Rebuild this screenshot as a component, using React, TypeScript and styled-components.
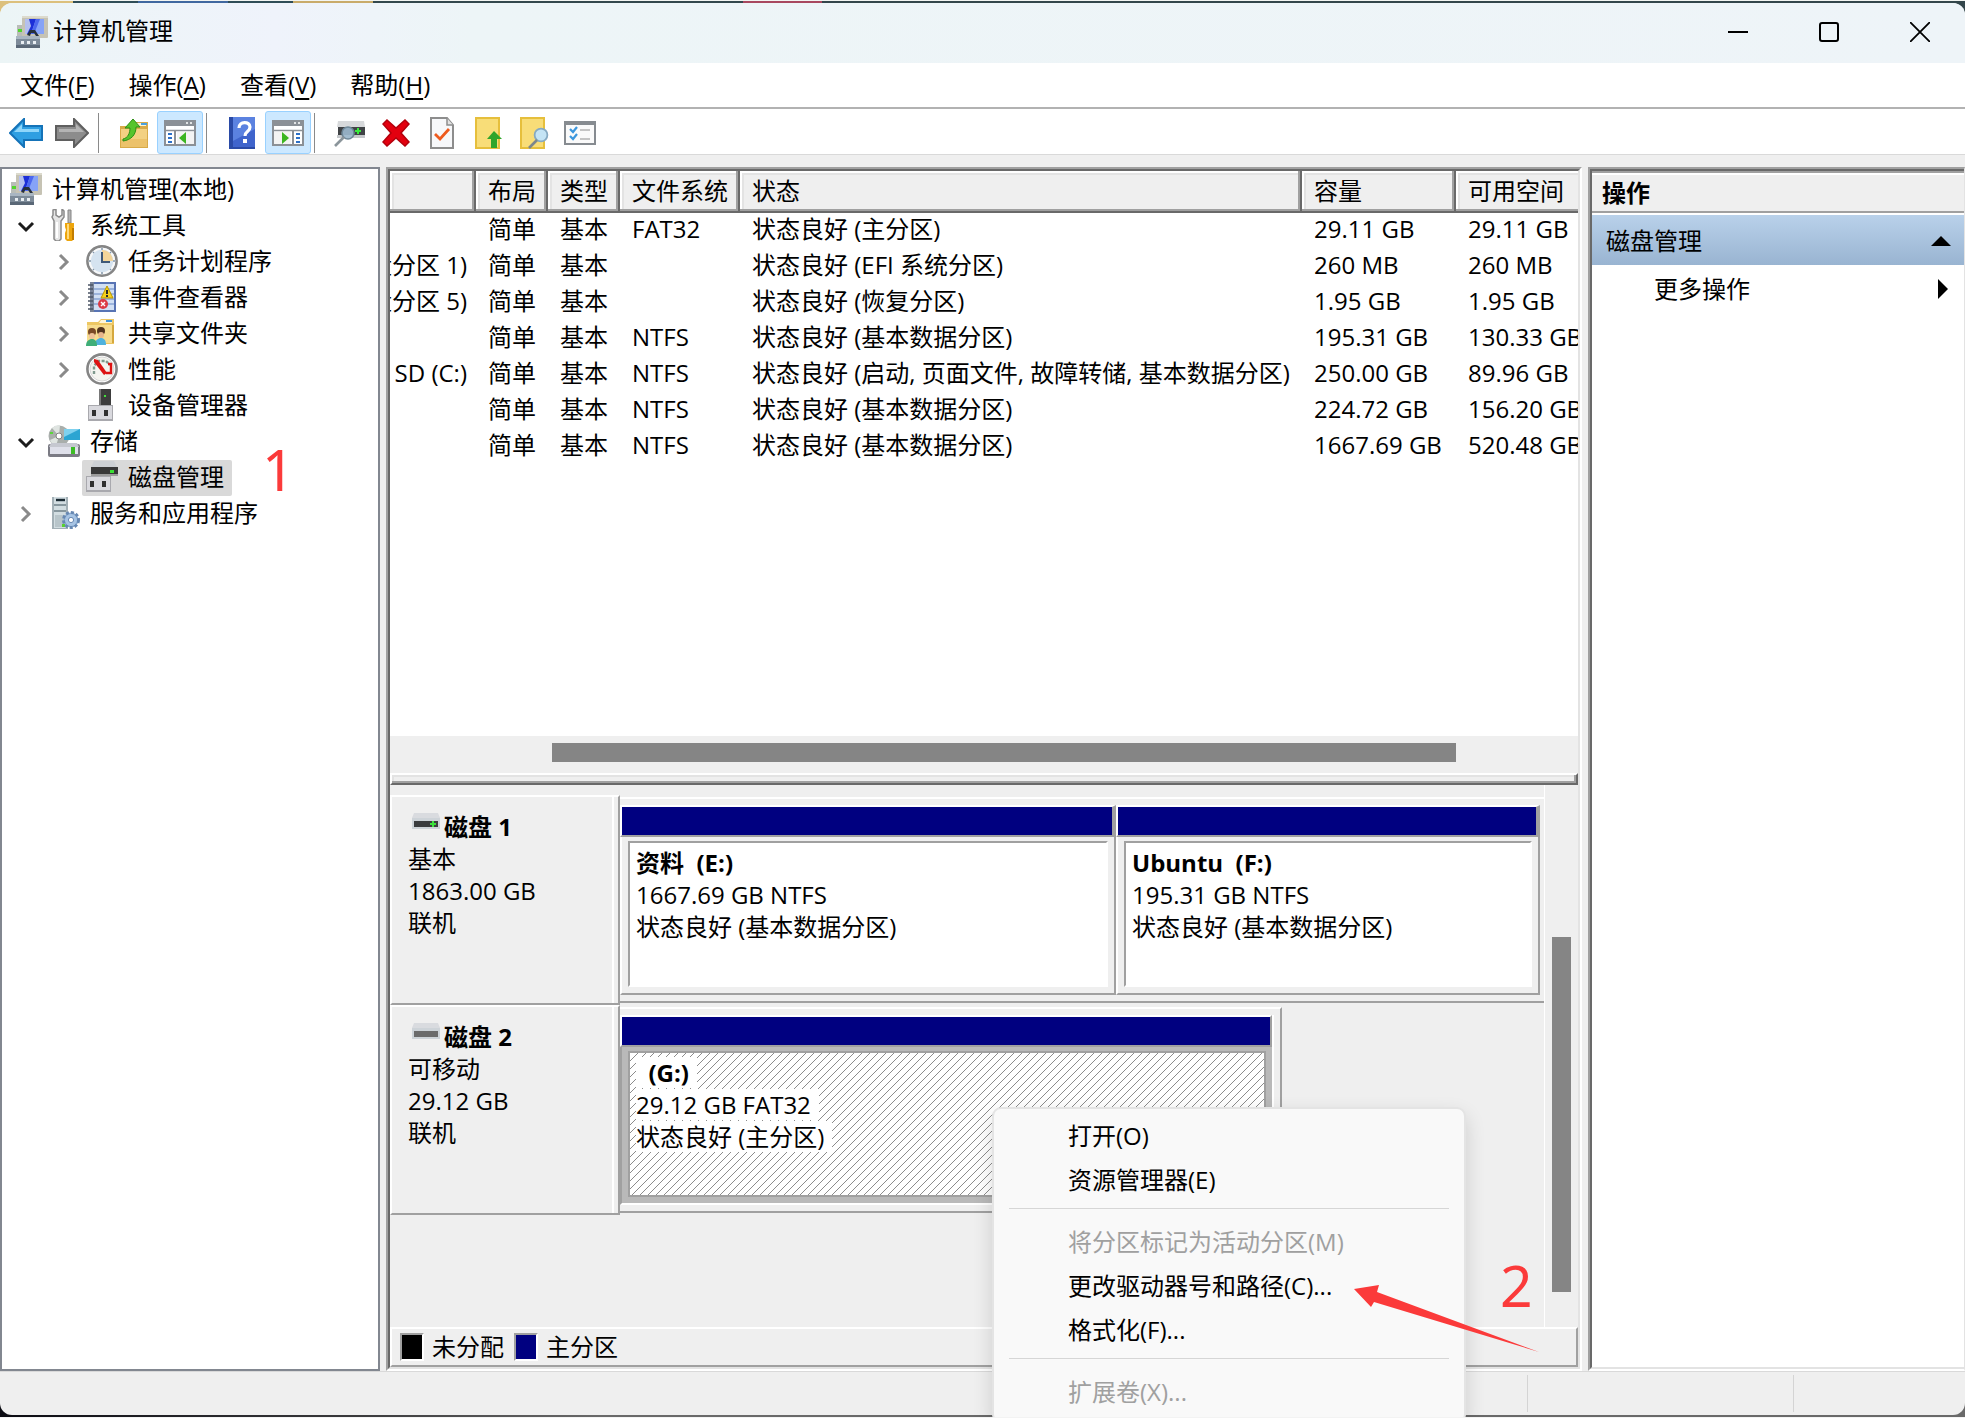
import React from "react";
import styled, { createGlobalStyle, css } from "styled-components";

const GlobalStyle = createGlobalStyle`
  *, *::before, *::after { box-sizing: border-box; }
  body {
    margin: 0;
    font-family: "Open Sans", "Noto Sans CJK SC", sans-serif;
    font-size: 24px;
    line-height: 32px;
    color: #000;
  }
  button { font: inherit; color: inherit; background: none; border: 0; padding: 0; margin: 0; text-align: left; }
  svg { display: block; flex: none; }
  h1, h2, p, ul { margin: 0; padding: 0; font: inherit; list-style: none; }
`;

const c = {
  face: "#efefef",
  shadow: "#a0a0a0",
  dark: "#696969",
  light: "#e3e3e3",
  thumb: "#858585",
  navy: "#000080",
  red: "#fb3a3a",
};

/* ---------- window frame ---------- */

const Desktop = styled.div`
  position: relative;
  display: flex;
  flex-direction: column;
  height: 100vh;
  min-height: 900px;
  overflow: hidden;
  padding: 2px 0;
  border-top: 1px solid #f3f5f2;
  border-bottom: 1px solid #f3f3f3;
  background:
    linear-gradient(90deg, #dcc07c 73px, #2f4d57 73px 138px, #4068a0 138px 228px, #2f4d57 228px 293px,
      #c9ab6a 293px 373px, #33484d 373px 743px, #a8485f 743px 822px, #33464b 822px) top / 100% 20px no-repeat,
    linear-gradient(90deg, #0b0b12, #3a3a3c 360px, #696969 600px) bottom / 100% 20px no-repeat;
`;

const Frame = styled.main`
  flex: 1;
  min-height: 0;
  display: flex;
  flex-direction: column;
  background: ${c.face};
  border-radius: 12px;
  overflow: hidden;
`;

const TitleBar = styled.header`
  display: flex;
  align-items: center;
  height: 60px;
  flex: none;
  padding: 0 0 3px 16px;
  background: linear-gradient(90deg, #ecf5f6, #eff3fb 14%, #edf5f7 24%, #eef4f8);
`;

const Title = styled.h1`
  flex: 1;
  padding: 0 0 2px 5px;
`;

const CaptionButton = styled.button`
  width: 91px;
  height: 56px;
  display: grid;
  place-items: center;
`;

const MenuBar = styled.nav`
  display: flex;
  flex: none;
  height: 46px;
  gap: 34px;
  padding: 0 20px;
  align-items: center;
  background: #fff;
  border-bottom: 2px solid #b2b2b2;
`;

const MenuButton = styled.button`
  text-underline-offset: 4px;
  text-decoration-thickness: 1px;
`;

const ToolBar = styled.div`
  display: flex;
  flex: none;
  height: 46px;
  padding: 2px 3px 0;
  background: #fff;
  border-bottom: 1px solid #d9d9d9;
`;

const ToolButton = styled.button<{ $on?: boolean }>`
  width: 46px;
  height: 43px;
  display: grid;
  place-items: center;
  border: 1px solid transparent;
  border-radius: 3px;
  ${(p) => p.$on && css`background: #cce8ff; border-color: #99d1ff;`}
`;

const ToolSeparator = styled.span`
  width: 1px;
  height: 40px;
  margin: 2px 12px 0 3px;
  background: #8a8a8a;
`;

const Body = styled.div`
  flex: 1;
  min-height: 0;
  display: grid;
  grid-template-columns: 380px minmax(0, 1fr) 377px;
  gap: 6px;
  padding-top: 12px;
`;

const StatusBar = styled.footer`
  display: flex;
  flex: none;
  height: 44px;
  padding: 3px 0;
  justify-content: flex-end;
  border-top: 1px solid #d9d9d9;
`;

const StatusCell = styled.span<{ $width: number }>`
  width: ${(p) => p.$width}px;
  border-left: 1px solid #d4d4d4;
`;

/* ---------- tree ---------- */

const TreePane = styled.aside`
  background: #fff;
  border: 2px solid #828790;
  padding-top: 3px;
`;

const TreeRow = styled.li<{ $level: number }>`
  display: flex;
  height: 36px;
  align-items: center;
  padding-left: ${(p) => (p.$level === 0 ? 8 : p.$level * 38 - 32)}px;
`;

const Twisty = styled.button`
  width: 36px;
  height: 36px;
  display: grid;
  place-items: center;
`;

const TreeItem = styled.button<{ $selected?: boolean; $root?: boolean }>`
  display: flex;
  align-items: center;
  height: 36px;
  gap: 10px;
  padding: 0 8px 2px ${(p) => (p.$root ? 0 : 4)}px;
  border-radius: 2px;
  white-space: nowrap;
  background: ${(p) => (p.$selected ? "#d9d9d9" : "none")};
`;

/* ---------- centre pane ---------- */

const Sunken = styled.section`
  display: flex;
  min-width: 0;
  min-height: 0;
  border: 2px solid;
  border-color: ${c.shadow} #fff #fff ${c.shadow};
`;

const SunkenInner = styled.div`
  flex: 1;
  min-width: 0;
  display: flex;
  flex-direction: column;
  border: 2px solid;
  border-color: ${c.dark} ${c.light} ${c.light} ${c.dark};
`;

const VolumeArea = styled.div`
  flex: 565 1 0;
  min-height: 0;
  overflow: hidden;
  background: #fff;
`;

const VolumeTable = styled.table`
  table-layout: fixed;
  width: 1210px;
  border-spacing: 0;
`;

const HeadCell = styled.th`
  height: 42px;
  padding: 0 0 0 12px;
  text-align: left;
  font-weight: 400;
  white-space: nowrap;
  background: ${c.face};
  border: solid ${c.dark};
  border-width: 0 2px 2px 0;
  box-shadow: inset -2px -2px ${c.shadow}, inset 2px 2px #fff, inset 4px 4px ${c.light};
`;

const Cell = styled.td`
  height: 36px;
  padding: 0 0 4px 12px;
  white-space: nowrap;
`;

const VolumeCell = styled.td`
  height: 36px;
  padding: 0 9px 4px 0;
`;

const ClippedName = styled.div`
  display: flex;
  justify-content: flex-end;
  overflow: hidden;
  white-space: nowrap;
`;

const HScroll = styled.div`
  display: flex;
  flex: none;
  height: 37px;
  padding: 7px 0 11px;
`;

const Splitter = styled.div`
  flex: none;
  height: 12px;
  border: 2px solid;
  border-color: #fff ${c.dark} ${c.dark} #fff;
  box-shadow: inset -2px -2px ${c.shadow}, inset 2px 2px ${c.light};
`;

const Span = styled.span<{ $size: number; $filled?: boolean }>`
  flex: ${(p) => p.$size} 1 0;
  background: ${(p) => (p.$filled ? c.thumb : "none")};
`;

const DiskArea = styled.div`
  flex: 542 1 0;
  min-height: 0;
  display: flex;
  overflow: hidden;
`;

const DiskList = styled.div`
  flex: 1;
  min-width: 0;
  padding-top: 10px;
`;

const VScroll = styled.div`
  display: flex;
  flex-direction: column;
  width: 34px;
  padding: 0 7px;
  border-left: 1px solid #fff;
`;

const DiskRow = styled.div`
  display: grid;
  grid-template-columns: 230px minmax(0, 1fr);
  height: 210px;
`;

const DiskLabel = styled.div`
  padding: 14px 0 0 16px;
  border: 2px solid;
  border-color: #fff ${c.shadow} ${c.shadow} #fff;
  box-shadow: inset -4px 0 ${c.face}, inset -6px 0 #fff;
`;

const DiskName = styled.h2`
  display: flex;
  gap: 4px;
  padding-left: 4px;
  font-weight: 700;
`;

const Track = styled.div<{ $used: number; $free: number }>`
  display: grid;
  grid-template-columns: ${(p) => p.$used}fr ${(p) => p.$free}fr;
  margin: 2px 0;
`;

const Partitions = styled.div<{ $closed?: boolean }>`
  display: flex;
  min-width: 0;
  padding: 6px ${(p) => (p.$closed ? 6 : 4)}px 6px 0;
  border: solid;
  border-width: 2px ${(p) => (p.$closed ? 2 : 0)}px 2px 0;
  border-color: #fff ${c.shadow} ${c.shadow};
`;

const Partition = styled.article<{ $size: number; $selected?: boolean }>`
  flex: ${(p) => p.$size} 1 0;
  min-width: 0;
  display: flex;
  flex-direction: column;
  border-right: ${(p) => (p.$selected ? "2px solid #fff" : 0)};
`;

const PartitionBar = styled.div<{ $selected?: boolean }>`
  height: 32px;
  background: ${c.navy};
  border: solid;
  border-width: 2px ${(p) => (p.$selected ? 2 : 4)}px 2px 2px;
  border-color: #fff ${c.shadow} ${c.shadow} #fff;
`;

const PartitionBody = styled.div<{ $selected?: boolean }>`
  flex: 1;
  display: flex;
  padding: 4px 6px 6px;
  border: solid;
  border-width: 0 ${(p) => (p.$selected ? 0 : 2)}px 2px 2px;
  border-color: ${(p) => (p.$selected ? `#fff #fff #fff ${c.shadow}` : `#fff ${c.shadow} ${c.shadow} #fff`)};
  background: ${(p) => (p.$selected ? "#b9b9b9" : c.face)};
`;

const PartitionFace = styled.div<{ $selected?: boolean }>`
  flex: 1;
  min-width: 0;
  padding: 4px 0 0 6px;
  white-space: pre;
  overflow: hidden;
  background: #fff;
  border: 2px solid;
  border-color: ${(p) => (p.$selected ? c.shadow : `${c.shadow} #fff #fff ${c.shadow}`)};
  ${(p) =>
    p.$selected &&
    css`background: linear-gradient(135deg, #fff 45%, #8c8c8c 46% 54%, #fff 55%) 0 0 / 8px 8px;`}
`;

const Line = styled.p<{ $bold?: boolean }>`
  width: fit-content;
  height: 31px;
  line-height: 31px;
  margin-bottom: 1px;
  padding-right: 8px;
  background: #fff;
  font-weight: ${(p) => (p.$bold ? 700 : 400)};
`;

const Legend = styled.div`
  display: flex;
  flex: none;
  align-items: center;
  height: 40px;
  padding-left: 8px;
  gap: 8px;
  border: 2px solid;
  border-color: #fff ${c.shadow} ${c.shadow} #fff;
`;

const Swatch = styled.span<{ $color: string }>`
  width: 24px;
  height: 28px;
  background: ${(p) => p.$color};
  border: 2px solid;
  border-color: ${c.shadow} #fff #fff ${c.shadow};
`;

const LegendText = styled.span`
  margin-right: 2px;
`;

/* ---------- actions pane ---------- */

const ActionsPane = styled.aside`
  display: flex;
  border: solid;
  border-width: 2px 1px 2px 2px;
  border-color: ${c.shadow} ${c.light} #fff ${c.shadow};
`;

const ActionsInner = styled.div`
  flex: 1;
  display: flex;
  flex-direction: column;
  background: #fff;
  border: solid;
  border-width: 2px 0 2px 2px;
  border-color: ${c.dark} ${c.light} ${c.light} ${c.dark};
`;

const ActionsTitle = styled.h2`
  height: 42px;
  line-height: 40px;
  padding-left: 10px;
  font-weight: 700;
  background: ${c.face};
  border-top: 2px solid ${c.shadow};
  border-bottom: 2px solid ${c.shadow};
  box-shadow: inset 0 2px #fff;
`;

const ActionsGroup = styled.button`
  display: flex;
  align-items: center;
  justify-content: space-between;
  height: 50px;
  margin-top: 2px;
  padding: 2px 13px 0 14px;
  background: linear-gradient(#b9d1ea, #99b4d1);
`;

const ActionsItem = styled.button`
  display: flex;
  align-items: center;
  justify-content: space-between;
  height: 48px;
  padding: 0 16px 0 62px;
`;

/* ---------- context menu and marks over the window ---------- */

const ContextMenu = styled.div`
  position: absolute;
  left: 992px;
  top: 1106px;
  width: 474px;
  padding: 6px 0;
  background: #f9f9f9;
  border: 2px solid #e4e4e4;
  border-radius: 9px;
  box-shadow: 0 8px 20px rgba(0, 0, 0, 0.14);
`;

const ContextItem = styled.button`
  display: block;
  width: 100%;
  height: 44px;
  padding: 0 0 3px 74px;
  &:disabled { color: #a0a0a0; }
`;

const ContextRule = styled.hr`
  height: 1px;
  margin: 5px 15px 12px;
  border: 0;
  background: #d6d6d6;
`;

const Mark = styled.span<{ $x: number; $y: number }>`
  position: absolute;
  left: ${(p) => p.$x}px;
  top: ${(p) => p.$y}px;
  font-family: "Noto Sans", sans-serif;
  font-size: 57px;
  line-height: 60px;
  color: ${c.red};
`;

const ArrowMark = styled.svg`
  position: absolute;
  left: 1350px;
  top: 1280px;
`;

/* ---------- icons ---------- */

const ComputerIcon = () => (
  <svg width="32" height="32" viewBox="0 0 32 32">
    <rect x="1" y="9" width="8" height="12" fill="#b9bdb8" />
    <rect x="2" y="13" width="4" height="3" fill="#52d52e" />
    <rect x="6" y="0" width="26" height="22" rx="1" fill="#c6c3b4" />
    <rect x="6" y="0" width="26" height="2" fill="#dcdacd" />
    <rect x="9" y="3" width="19" height="15" fill="#1c2fd8" />
    <path d="M20 3h8v15H15z" fill="#86a3f7" />
    <path d="M20 3h4l-6 15h-3z" fill="#4d68ee" />
    <path d="M9 3h4l2 7-4 8H9z" fill="#b4c0ee" />
    <path d="M11 19l3-5h5l4 6h-3l-2-3h-3l-1 3z" fill="#26303c" />
    <rect x="0" y="20" width="24" height="12" fill="#7d8b99" />
    <rect x="0" y="20" width="24" height="3" fill="#a9b6c2" />
    <rect x="0" y="29" width="24" height="3" fill="#5a6877" />
    <path d="M5 25h3v3H5zM11 25h3v3h-3zM17 25h3v3h-3z" fill="#e8eef2" />
  </svg>
);

const ToolsIcon = () => (
  <svg width="32" height="32" viewBox="0 0 32 32">
    <path d="M5 6V1l3-1v6l3 2 3-2V0l2 2v6l-3 4v18l-2 2H8l-2-2V12L4 8z" fill="#e5e5e5" stroke="#8a8a8a" strokeWidth="1.5" />
    <path d="M9 13v16" stroke="#fff" strokeWidth="2" />
    <path d="M20 1h3v13h-3z" fill="#b5b5b5" stroke="#858585" />
    <path d="M17 14h9v4l-1 3 1 3v6l-2 2h-5l-2-2v-6l1-3-1-3z" fill="#eda50c" />
    <path d="M19 15h2v15h-2z" fill="#ffd97a" />
    <path d="M24 19h2v12h-2z" fill="#c27d00" />
  </svg>
);

const ClockIcon = () => (
  <svg width="32" height="32" viewBox="0 0 32 32">
    <circle cx="16" cy="16" r="14.6" fill="#d8e5f1" stroke="#858585" strokeWidth="2.6" />
    <circle cx="16" cy="16" r="12.2" fill="#d5e3f0" stroke="#f8f8f8" strokeWidth="2" />
    <path d="M16 16V5a11 11 0 0 1 11 11z" fill="#f3d59a" />
    <path d="M16 7v10h8" fill="none" stroke="#3e5878" strokeWidth="2" />
    <path d="M16 3v2M16 27v2M3 16h2M27 16h2M7 7l1 1M25 25l-1-1M7 25l1-1M25 7l-1 1" stroke="#8296aa" strokeWidth="1.5" />
  </svg>
);

const EventIcon = () => (
  <svg width="32" height="32" viewBox="0 0 32 32">
    <rect x="4" y="1" width="26" height="30" fill="#5874b4" />
    <rect x="8" y="3" width="20" height="26" fill="#d2e0f4" />
    <path d="M8 8h20M8 13h20M8 18h20M8 23h20" stroke="#8ba5d3" strokeWidth="1.5" />
    <rect x="4" y="1" width="4" height="30" fill="#7a8498" />
    <path d="M2 4h5M2 8h5M2 12h5M2 16h5M2 20h5M2 24h5M2 28h5" stroke="#4c5566" strokeWidth="1.6" />
    <path d="M21 5l6 12H15z" fill="#f6d21c" stroke="#b99500" />
    <path d="M21 9v4M21 14v2" stroke="#2a2a2a" strokeWidth="2" />
    <circle cx="17" cy="23" r="5" fill="#dc3b45" />
    <path d="M15 21l4 4M19 21l-4 4" stroke="#fff" strokeWidth="1.4" />
  </svg>
);

const SharedIcon = () => (
  <svg width="32" height="32" viewBox="0 0 32 32">
    <path d="M1 5h11l3-3h13v25H1z" fill="#edc763" />
    <path d="M15 3h11v3H13z" fill="#fff6d8" />
    <path d="M20 3h6v2h-6z" fill="#3f93de" />
    <path d="M1 8h27v18H1z" fill="#f7dc8e" />
    <path d="M26 8h2v18h-2z" fill="#d5a83e" />
    <circle cx="15" cy="14" r="4" fill="#51331d" />
    <circle cx="15" cy="18" r="3" fill="#e8b68c" />
    <path d="M9 28c0-5 3-7 6-7s5 2 5 7z" fill="#4fb2dd" />
    <circle cx="6" cy="15" r="4" fill="#7a4a26" />
    <circle cx="6" cy="19" r="3" fill="#efc39b" />
    <path d="M0 29c0-5 3-7 6-7s5 2 5 7z" fill="#3fae78" />
  </svg>
);

const PerformanceIcon = () => (
  <svg width="32" height="32" viewBox="0 0 32 32">
    <circle cx="16" cy="16" r="14.6" fill="#fff" stroke="#858585" strokeWidth="2.6" />
    <circle cx="16" cy="16" r="12" fill="#f4f4ef" stroke="#d8d8d8" />
    <path d="M8 21v-8l4-5h8l4 4" fill="none" stroke="#7f9a8e" strokeWidth="2.4" strokeDasharray="3 1.5" />
    <path d="M22 11h3v9h-5" fill="none" stroke="#dd1313" strokeWidth="2.4" />
    <path d="M8 6l4 1 9 13-3 2L8 9z" fill="#dd1313" />
  </svg>
);

const Plug = ({ x, y }: { x: number; y: number }) => (
  <g transform={`translate(${x} ${y})`}>
    <rect width="25" height="16" fill="#a9a9ae" />
    <rect x="1" y="1" width="23" height="13" fill="#d9d9de" />
    <rect x="4" y="5" width="4" height="6" fill="#303030" />
    <rect x="16" y="5" width="4" height="6" fill="#303030" />
  </g>
);

const DeviceIcon = () => (
  <svg width="32" height="32" viewBox="0 0 32 32">
    <rect x="14" y="0" width="11" height="17" fill="#3d3d3d" />
    <rect x="13" y="0" width="2" height="17" fill="#787878" />
    <rect x="18" y="6" width="2" height="2" fill="#42e03a" />
    <Plug x={2} y={16} />
  </svg>
);

const StorageIcon = () => (
  <svg width="32" height="32" viewBox="0 0 32 32">
    <circle cx="11" cy="11" r="10.5" fill="#a9aeab" />
    <path d="M11 11L4 3a11 11 0 0 1 8-3z" fill="#dfe4e1" />
    <path d="M11 11l-9 4a10 10 0 0 0 6 6z" fill="#dfe4e1" />
    <circle cx="11" cy="11" r="3" fill="#fff" stroke="#838383" />
    <rect x="2" y="7" width="3" height="2" fill="#5bd63a" />
    <rect x="16" y="4" width="16" height="11" fill="#2ba5d2" />
    <path d="M16 4h16l-16 8z" fill="#7fd1ee" />
    <rect x="0" y="19" width="32" height="13" rx="2" fill="#7b7b84" />
    <path d="M3 18h26l2 4H1z" fill="#c6c8d0" />
    <rect x="2" y="22" width="28" height="7" fill="#dfe0ea" />
    <rect x="23" y="22" width="4" height="7" fill="#3cbc24" />
  </svg>
);

const DiskManagementIcon = () => (
  <svg width="32" height="32" viewBox="0 0 32 32">
    <path d="M8 0h20l3 6H5z" fill="#cdd0d4" />
    <rect x="5" y="6" width="27" height="8" fill="#383838" />
    <rect x="5" y="13" width="27" height="2" fill="#9b9b9b" />
    <rect x="24" y="9" width="4" height="3" fill="#3be034" />
    <Plug x={0} y={15} />
  </svg>
);

const ServicesIcon = () => (
  <svg width="32" height="32" viewBox="0 0 32 32">
    <rect x="4" y="0" width="16" height="32" fill="#a3b0b6" />
    <rect x="6" y="0" width="12" height="31" fill="#d2dde1" />
    <path d="M8 3h9" stroke="#1b2b33" strokeWidth="2.4" />
    <path d="M6 8h12M6 14h12" stroke="#6f8088" strokeWidth="1.6" />
    <path d="M7 18h10v12H7z" fill="#b8c5ca" />
    <rect x="14" y="27" width="3" height="3" fill="#58d32e" />
    <circle cx="23" cy="23" r="7.5" fill="#86a8cf" stroke="#6788b2" strokeWidth="3" strokeDasharray="3 2" />
    <circle cx="23" cy="23" r="6" fill="#a7c4e4" />
    <circle cx="23" cy="23" r="2.6" fill="#fff" stroke="#6788b2" />
  </svg>
);

const Chevron = ({ open }: { open?: boolean }) =>
  open ? (
    <svg width="18" height="18" viewBox="0 0 18 18">
      <path d="M2 6l7 7 7-7" fill="none" stroke="#1c1c1c" strokeWidth="3" />
    </svg>
  ) : (
    <svg width="18" height="18" viewBox="0 0 18 18">
      <path d="M5 2l7 7-7 7" fill="none" stroke="#8a8a8a" strokeWidth="3" />
    </svg>
  );

const BlueArrow = ({ forward }: { forward?: boolean }) => (
  <svg width="34" height="30" viewBox="0 0 34 30">
    <g transform={forward ? "translate(34 0) scale(-1 1)" : undefined}>
      <path d="M1 15L15 1v7h18v14H15v7z" fill={forward ? "#8c8c8c" : "#2f9fe2"} stroke={forward ? "#5f5f5f" : "#1573b8"} strokeWidth="2" />
      <path d="M5 14l8-8v5h17v3z" fill={forward ? "#b4b4b4" : "#8fd6fa"} />
    </g>
  </svg>
);

const FolderUpIcon = () => (
  <svg width="30" height="32" viewBox="0 0 30 32">
    <path d="M1 9h9l3-4h16v26H1z" fill="#d8aa48" />
    <path d="M13 6h14v3H12z" fill="#fdf3cf" />
    <path d="M22 6h6v2h-6z" fill="#4aa0e0" />
    <path d="M2 12h26v18H2z" fill="#f3d182" />
    <path d="M2 22h26v8H2z" fill="#ecc26a" />
    <path d="M4 22c5-1 7-6 7-11H6l8-9 7 8h-4c0 8-5 13-13 14z" fill="#56c42c" stroke="#2c8f14" />
  </svg>
);

const PanesIcon = ({ right }: { right?: boolean }) => (
  <svg width="32" height="26" viewBox="0 0 32 26">
    <rect x="1" y="1" width="30" height="24" fill="#fff" stroke="#8b9096" strokeWidth="2" />
    <rect x="1" y="1" width="30" height="5" fill="#8b9096" />
    <path d="M22 3h2M26 3h2" stroke="#fff" strokeWidth="1.6" />
    <path d="M2 10.5h28" stroke="#8b9096" strokeWidth="1.6" />
    <g transform={right ? "translate(32 0) scale(-1 1)" : undefined}>
      <path d="M11 11v14" stroke="#8b9096" strokeWidth="2" />
      <rect x="13" y="12" width="17" height="12" fill="#f3f3f3" />
      <path d="M4 14h4M4 18h4M4 22h4" stroke="#2c70c8" strokeWidth="1.8" />
      <path d="M22 12v12l-7-6z" fill="#3cb521" />
    </g>
  </svg>
);

const HelpIcon = () => (
  <svg width="26" height="32" viewBox="0 0 26 32">
    <rect width="26" height="32" fill="#2a4aa6" />
    <path d="M4 0h22v30H4z" fill="#3f64cc" />
    <path d="M4 0h22v12L4 24z" fill="#5b82e0" />
    <path d="M10 11c0-7 11-7 11-1 0 5-5 4-5 9" fill="none" stroke="#fff" strokeWidth="3.2" />
    <rect x="14" y="22" width="4" height="4" fill="#fff" />
  </svg>
);

const DriveSearchIcon = () => (
  <svg width="32" height="28" viewBox="0 0 32 28">
    <path d="M4 2h26l1 6H3z" fill="#d7d9db" />
    <rect x="4" y="8" width="27" height="8" fill="#404346" />
    <rect x="3" y="16" width="28" height="3" fill="#c5c8cb" />
    <path d="M21 12h6M24 9v6" stroke="#39ea3c" strokeWidth="2" />
    <circle cx="14" cy="14" r="6" fill="#9cb9ce" fillOpacity="0.9" stroke="#6e8798" strokeWidth="1.6" />
    <path d="M10 18L1 27" stroke="#8b959b" strokeWidth="2.6" />
  </svg>
);

const DeleteIcon = () => (
  <svg width="28" height="28" viewBox="0 0 28 28">
    <path d="M5 1l9 8 9-8 4 4-8 9 8 9-4 4-9-8-9 8-4-4 8-9-8-9z" fill="#e3000f" stroke="#b3000c" strokeWidth="1.5" />
  </svg>
);

const PageCheckIcon = () => (
  <svg width="24" height="32" viewBox="0 0 24 32">
    <path d="M1 1h16l6 7v23H1z" fill="#f7f8fa" stroke="#8d8d8d" strokeWidth="2" />
    <path d="M17 1v7h6" fill="#e2e2e2" stroke="#8d8d8d" strokeWidth="1.5" />
    <path d="M5 17l5 5 9-10" fill="none" stroke="#ee5b1e" strokeWidth="2.8" />
  </svg>
);

const YellowPage = () => <path d="M1 1h23v30H1z" fill="#f8dd78" stroke="#e6bf3c" strokeWidth="2" />;

const PageUpIcon = () => (
  <svg width="27" height="32" viewBox="0 0 27 32">
    <YellowPage />
    <path d="M19 14l8 8h-5v9h-6v-9h-4z" fill="#2fa52b" />
  </svg>
);

const PageSearchIcon = () => (
  <svg width="29" height="32" viewBox="0 0 29 32">
    <YellowPage />
    <circle cx="21" cy="18" r="6.4" fill="#c4e4f5" stroke="#86aac2" strokeWidth="1.8" />
    <path d="M17 23l-8 8" stroke="#7d868c" strokeWidth="2.6" />
  </svg>
);

const ChecklistIcon = () => (
  <svg width="32" height="24" viewBox="0 0 32 24">
    <rect x="1" y="1" width="30" height="22" fill="#fafafa" stroke="#868b90" strokeWidth="2" />
    <rect x="1" y="1" width="30" height="3" fill="#868b90" />
    <path d="M6 8l3 3 4-5M6 15l3 3 4-5" fill="none" stroke="#3c97dd" strokeWidth="2.2" />
    <path d="M16 9h10M16 18h10" stroke="#c4c4c4" strokeWidth="2" />
  </svg>
);

const DriveIcon = ({ online }: { online: boolean }) => (
  <svg width="28" height="18" viewBox="0 0 28 18">
    <path d="M2 2h24l2 5H0z" fill="#d9dbdf" />
    <rect x="0" y="7" width="28" height="11" fill="#cdd3d8" />
    <rect x="2" y="10" width="24" height="6" fill={online ? "#3a3c3e" : "#6b6b6b"} />
    {online && <path d="M18 13h6M21 10v6" stroke="#39e03a" strokeWidth="2" />}
  </svg>
);

/* ---------- data ---------- */

const tree: { label: string; level: number; icon: React.FC; state?: "open" | "closed"; selected?: boolean }[] = [
  { label: "计算机管理(本地)", level: 0, icon: ComputerIcon },
  { label: "系统工具", level: 1, icon: ToolsIcon, state: "open" },
  { label: "任务计划程序", level: 2, icon: ClockIcon, state: "closed" },
  { label: "事件查看器", level: 2, icon: EventIcon, state: "closed" },
  { label: "共享文件夹", level: 2, icon: SharedIcon, state: "closed" },
  { label: "性能", level: 2, icon: PerformanceIcon, state: "closed" },
  { label: "设备管理器", level: 2, icon: DeviceIcon },
  { label: "存储", level: 1, icon: StorageIcon, state: "open" },
  { label: "磁盘管理", level: 2, icon: DiskManagementIcon, selected: true },
  { label: "服务和应用程序", level: 1, icon: ServicesIcon, state: "closed" },
];

const columns = [
  { name: "", width: 86 },
  { name: "布局", width: 72 },
  { name: "类型", width: 72 },
  { name: "文件系统", width: 120 },
  { name: "状态", width: 562 },
  { name: "容量", width: 154 },
  { name: "可用空间", width: 144 },
];

const volumes = [
  ["", "FAT32", "状态良好 (主分区)", "29.11 GB", "29.11 GB"],
  ["盘分区 1)", "", "状态良好 (EFI 系统分区)", "260 MB", "260 MB"],
  ["盘分区 5)", "", "状态良好 (恢复分区)", "1.95 GB", "1.95 GB"],
  ["", "NTFS", "状态良好 (基本数据分区)", "195.31 GB", "130.33 GB"],
  ["SD (C:)", "NTFS", "状态良好 (启动, 页面文件, 故障转储, 基本数据分区)", "250.00 GB", "89.96 GB"],
  ["", "NTFS", "状态良好 (基本数据分区)", "224.72 GB", "156.20 GB"],
  ["", "NTFS", "状态良好 (基本数据分区)", "1667.69 GB", "520.48 GB"],
];

const disks = [
  {
    name: "磁盘 1", kind: "基本", size: "1863.00 GB", online: true, used: 924, free: 0,
    parts: [
      { label: "资料  (E:)", info: "1667.69 GB NTFS", status: "状态良好 (基本数据分区)", share: 496, selected: false },
      { label: "Ubuntu  (F:)", info: "195.31 GB NTFS", status: "状态良好 (基本数据分区)", share: 424, selected: false },
    ],
  },
  {
    name: "磁盘 2", kind: "可移动", size: "29.12 GB", online: false, used: 662, free: 262,
    parts: [{ label: "  (G:)", info: "29.12 GB FAT32", status: "状态良好 (主分区)", share: 1, selected: true }],
  },
];

const menus = [["文件", "F"], ["操作", "A"], ["查看", "V"], ["帮助", "H"]];

export default function App() {
  return (
    <Desktop>
      <GlobalStyle />
      <Frame>
        <TitleBar>
          <ComputerIcon />
          <Title>计算机管理</Title>
          <CaptionButton aria-label="最小化">
            <svg width="20" height="20"><path d="M0 10h20" stroke="#000" strokeWidth="2" /></svg>
          </CaptionButton>
          <CaptionButton aria-label="最大化">
            <svg width="20" height="20"><rect x="1" y="1" width="18" height="18" rx="2" fill="none" stroke="#000" strokeWidth="2" /></svg>
          </CaptionButton>
          <CaptionButton aria-label="关闭">
            <svg width="20" height="20"><path d="M0 0l20 20M20 0L0 20" stroke="#000" strokeWidth="1.8" /></svg>
          </CaptionButton>
        </TitleBar>

        <MenuBar>
          {menus.map(([name, key]) => (
            <MenuButton key={key}>{name}(<u>{key}</u>)</MenuButton>
          ))}
        </MenuBar>

        <ToolBar>
          <ToolButton aria-label="后退"><BlueArrow /></ToolButton>
          <ToolButton aria-label="前进"><BlueArrow forward /></ToolButton>
          <ToolSeparator />
          <ToolButton aria-label="向上一级"><FolderUpIcon /></ToolButton>
          <ToolButton aria-label="显示控制台树" $on><PanesIcon /></ToolButton>
          <ToolSeparator />
          <ToolButton aria-label="帮助"><HelpIcon /></ToolButton>
          <ToolButton aria-label="显示操作窗格" $on><PanesIcon right /></ToolButton>
          <ToolSeparator />
          <ToolButton aria-label="重新扫描磁盘"><DriveSearchIcon /></ToolButton>
          <ToolButton aria-label="删除"><DeleteIcon /></ToolButton>
          <ToolButton aria-label="属性"><PageCheckIcon /></ToolButton>
          <ToolButton aria-label="打开"><PageUpIcon /></ToolButton>
          <ToolButton aria-label="浏览"><PageSearchIcon /></ToolButton>
          <ToolButton aria-label="设置"><ChecklistIcon /></ToolButton>
        </ToolBar>

        <Body>
          <TreePane>
            <ul>
              {tree.map(({ label, level, icon: Icon, state, selected }) => (
                <TreeRow key={label} $level={level}>
                  {level > 0 && (state ? (
                    <Twisty aria-label={label}><Chevron open={state === "open"} /></Twisty>
                  ) : (
                    <Twisty as="span" />
                  ))}
                  <TreeItem $root={level === 0} $selected={selected}><Icon />{label}</TreeItem>
                </TreeRow>
              ))}
            </ul>
          </TreePane>

          <Sunken>
            <SunkenInner>
              <VolumeArea>
                <VolumeTable>
                  <colgroup>
                    {columns.map((col) => <col key={col.name} width={col.width} />)}
                  </colgroup>
                  <thead>
                    <tr>{columns.map((col) => <HeadCell key={col.name} scope="col">{col.name}</HeadCell>)}</tr>
                  </thead>
                  <tbody>
                    {volumes.map(([name, fs, status, size, free], i) => (
                      <tr key={i}>
                        <VolumeCell><ClippedName>{name}</ClippedName></VolumeCell>
                        <Cell>简单</Cell>
                        <Cell>基本</Cell>
                        <Cell>{fs}</Cell>
                        <Cell>{status}</Cell>
                        <Cell>{size}</Cell>
                        <Cell>{free}</Cell>
                      </tr>
                    ))}
                  </tbody>
                </VolumeTable>
              </VolumeArea>
              <HScroll><Span $size={162} /><Span $size={904} $filled /><Span $size={122} /></HScroll>
              <Splitter />
              <DiskArea>
                <DiskList>
                  {disks.map((disk) => (
                    <DiskRow key={disk.name}>
                      <DiskLabel>
                        <DiskName><DriveIcon online={disk.online} />{disk.name}</DiskName>
                        <p>{disk.kind}</p>
                        <p>{disk.size}</p>
                        <p>联机</p>
                      </DiskLabel>
                      <Track $used={disk.used} $free={disk.free}>
                        <Partitions $closed={disk.free > 0}>
                          {disk.parts.map((part) => (
                            <Partition key={part.label} $size={part.share} $selected={part.selected}>
                              <PartitionBar $selected={part.selected} />
                              <PartitionBody $selected={part.selected}>
                                <PartitionFace $selected={part.selected}>
                                  <Line $bold>{part.label}</Line>
                                  <Line>{part.info}</Line>
                                  <Line>{part.status}</Line>
                                </PartitionFace>
                              </PartitionBody>
                            </Partition>
                          ))}
                        </Partitions>
                      </Track>
                    </DiskRow>
                  ))}
                </DiskList>
                <VScroll><Span $size={152} /><Span $size={355} $filled /><Span $size={35} /></VScroll>
              </DiskArea>
              <Legend>
                <Swatch $color="#000" /><LegendText>未分配</LegendText>
                <Swatch $color={c.navy} /><LegendText>主分区</LegendText>
              </Legend>
            </SunkenInner>
          </Sunken>

          <ActionsPane>
            <ActionsInner>
              <ActionsTitle>操作</ActionsTitle>
              <ActionsGroup>
                磁盘管理
                <svg width="20" height="10"><path d="M0 10L10 0l10 10z" /></svg>
              </ActionsGroup>
              <ActionsItem>
                更多操作
                <svg width="10" height="20"><path d="M0 0l10 10L0 20z" /></svg>
              </ActionsItem>
            </ActionsInner>
          </ActionsPane>
        </Body>

        <StatusBar>
          <StatusCell $width={266} />
          <StatusCell $width={172} />
        </StatusBar>
      </Frame>

      <ContextMenu>
        <ContextItem>打开(O)</ContextItem>
        <ContextItem>资源管理器(E)</ContextItem>
        <ContextRule />
        <ContextItem disabled>将分区标记为活动分区(M)</ContextItem>
        <ContextItem>更改驱动器号和路径(C)...</ContextItem>
        <ContextItem>格式化(F)...</ContextItem>
        <ContextRule />
        <ContextItem disabled>扩展卷(X)...</ContextItem>
      </ContextMenu>
      <Mark $x={262} $y={438}>1</Mark>
      <Mark $x={1500} $y={1254}>2</Mark>
      <ArrowMark width="192" height="72">
        <path d="M4 8l25-4-2 7 162 60L24 21l-3 5z" fill={c.red} />
      </ArrowMark>
    </Desktop>
  );
}
